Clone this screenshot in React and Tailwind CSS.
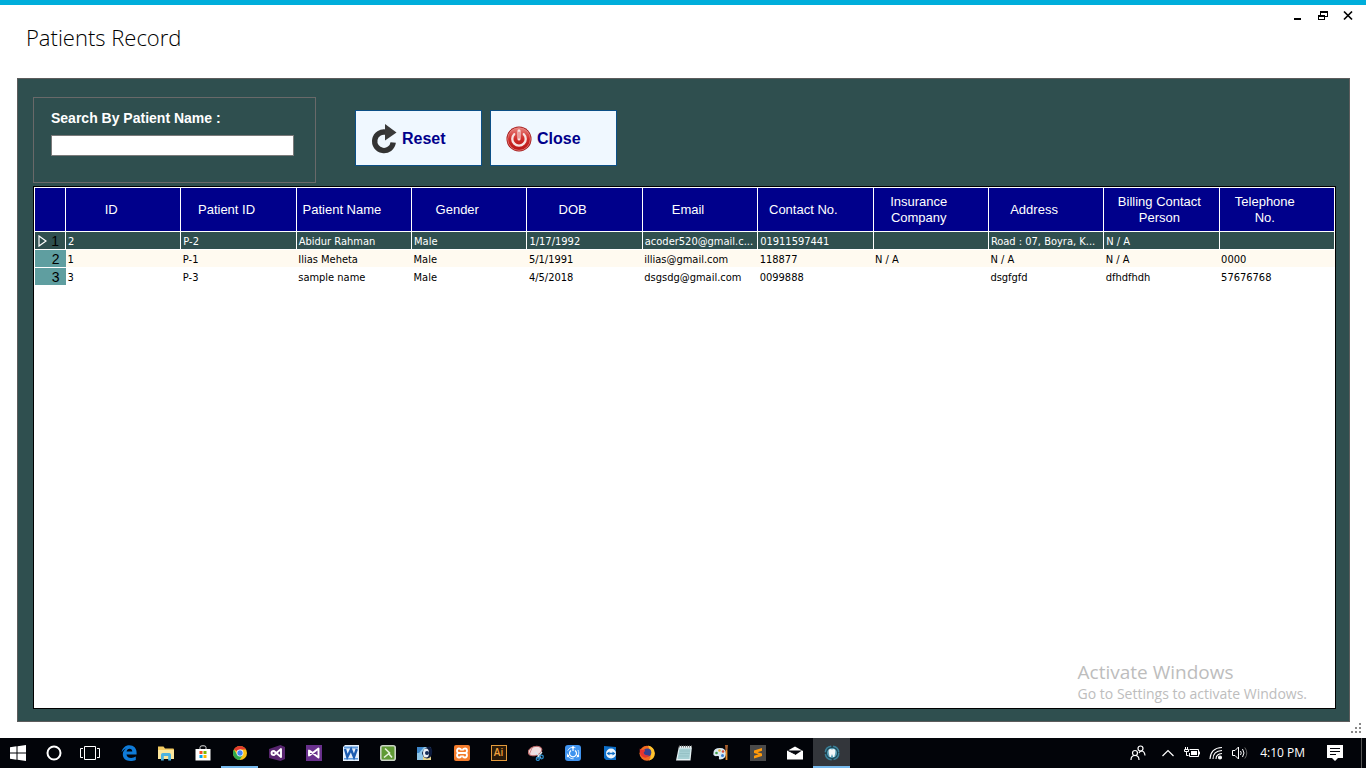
import React, { useState } from "react";

const columns = [
  { key: "id", label: "ID" },
  { key: "patientId", label: "Patient ID" },
  { key: "name", label: "Patient Name" },
  { key: "gender", label: "Gender" },
  { key: "dob", label: "DOB" },
  { key: "email", label: "Email" },
  { key: "contact", label: "Contact No." },
  { key: "insurance", label: "Insurance Company" },
  { key: "address", label: "Address" },
  { key: "billing", label: "Billing Contact Person", wide: true },
  { key: "telephone", label: "Telephone No." },
];

const patients = [
  {
    id: "2",
    patientId: "P-2",
    name: "Abidur Rahman",
    gender: "Male",
    dob: "1/17/1992",
    email: "acoder520@gmail.c...",
    contact: "01911597441",
    insurance: "",
    address: "Road : 07, Boyra, K...",
    billing: "N / A",
    telephone: "",
  },
  {
    id: "1",
    patientId: "P-1",
    name: "Ilias Meheta",
    gender: "Male",
    dob: "5/1/1991",
    email: "illias@gmail.com",
    contact: "118877",
    insurance: "N / A",
    address: "N / A",
    billing: "N / A",
    telephone: "0000",
  },
  {
    id: "3",
    patientId: "P-3",
    name: "sample name",
    gender: "Male",
    dob: "4/5/2018",
    email: "dsgsdg@gmail.com",
    contact: "0099888",
    insurance: "",
    address: "dsgfgfd",
    billing: "dfhdfhdh",
    telephone: "57676768",
  },
];

const ResetIcon = () => (
  <svg width="26" height="30" viewBox="0 0 26 30" aria-hidden="true">
    <path d="M15 8.200A9.300 9.300 0 1 0 22.200 18.500" fill="none" stroke="#333" strokeWidth="5.400" />
    <path d="M14 0 25.500 8.500 14 16.500Z" fill="#3a3a3a" />
  </svg>
);

const PowerIcon = () => (
  <svg width="26" height="26" viewBox="0 0 27 27" aria-hidden="true">
    <defs>
      <linearGradient id="power-red" x1="0" y1="0" x2="0" y2="1">
        <stop offset="0" stopColor="#e8837e" />
        <stop offset="0.5" stopColor="#cf2c29" />
        <stop offset="1" stopColor="#b81616" />
      </linearGradient>
    </defs>
    <circle cx="13.500" cy="13.500" r="13" fill="#a31515" />
    <circle cx="13.500" cy="13.500" r="11.800" fill="url(#power-red)" stroke="#ef9a96" strokeWidth="0.700" />
    <path d="M8.500 8.500a7 7 0 1 0 10 0" fill="none" stroke="#f7e4e3" strokeWidth="2.400" strokeLinecap="round" />
    <path d="M13.500 5v8.500" stroke="#f7e4e3" strokeWidth="3.200" strokeLinecap="round" />
    <path d="M13.500 6v7" stroke="#d8443f" strokeWidth="0.900" />
  </svg>
);

const taskbarApps = [
  {
    name: "Microsoft Edge",
    art: (
      <path
        d="M.600 7.300C1.300 3 4.400.300 8.400.300c4.400 0 7.200 3 7.200 7.400v1.700H5.500c.200 2.500 2.400 3.500 4.700 3.500 1.700 0 3.200-.500 4.600-1.300v3.300c-1.600.800-3.400 1.100-5.300 1.100-4.700 0-7.700-2.500-7.700-6.700 0-2.700 1.500-4.900 4-6-1.800.300-3.800 1.600-5.200 4Zm5-.700h5.700c0-1.900-1-2.900-2.700-2.900-1.600 0-2.800 1.100-3 2.900Z"
        fill="#0f7bd8"
      />
    ),
  },
  {
    name: "File Explorer",
    art: (
      <>
        <path d="M0 1.500h5.500l1.500 2H15q1 0 1 1v9.500H0Z" fill="#f3cb62" />
        <path d="M0 5h16v9H0Z" fill="#fce69c" />
        <path d="M3 15.500V9.800Q3 8 4.800 8h6.400Q13 8 13 9.800v5.700h-2.800V11H5.800v4.500Z" fill="#4db3e0" />
      </>
    ),
  },
  {
    name: "Store",
    art: (
      <>
        <path d="M5 4.500V2.500Q5 .800 7 .800h2q2 0 2 1.700v2" fill="none" stroke="#ddd" />
        <path d="M.500 4h15v11.500h-15Z" fill="#fff" />
        <path d="M4.500 6h3v3h-3Z" fill="#f25022" />
        <path d="M8.500 6h3v3h-3Z" fill="#7fba00" />
        <path d="M4.500 10h3v3h-3Z" fill="#00a4ef" />
        <path d="M8.500 10h3v3h-3Z" fill="#ffb900" />
      </>
    ),
  },
  {
    name: "Google Chrome",
    running: true,
    art: (
      <>
        <circle cx="8" cy="8" r="7" fill="#fbc116" />
        <path d="M8 8 1.900 4.500A7 7 0 0 1 14.100 4.500H8Z" fill="#e33b2e" />
        <path d="M1.900 4.500A7 7 0 0 0 7.600 15L11 9.700 8 8 4.900 9.500Z" fill="#2da94f" />
        <circle cx="8" cy="8" r="3.400" fill="#fff" />
        <circle cx="8" cy="8" r="2.700" fill="#4285f4" />
      </>
    ),
  },
  {
    name: "Visual Studio",
    art: (
      <>
        <path d="M11.500 0 16 2v12l-4.500 2L0 13V4Z" fill="#58266f" />
        <path d="M12 4v8L5 6q-2.500 0-2.500 2T5 10l7-6Z" fill="none" stroke="#fff" strokeWidth="1.900" strokeLinejoin="round" />
      </>
    ),
  },
  {
    name: "Visual Studio Blend",
    art: (
      <>
        <path d="M0 0h16v16H0Z" fill="#68308c" />
        <path d="M12.500 3.500v9L4 6 3 5.500v5L4 10l8.500-6.500Z" fill="none" stroke="#fff" strokeWidth="1.900" strokeLinejoin="round" />
      </>
    ),
  },
  {
    name: "Word",
    art: (
      <>
        <path d="M2 0h14v16H0V2Z" fill="#e6f0fb" />
        <path d="M1 1.500h14v2H1ZM1 13h14v1.500H1Z" fill="#5d9ade" />
        <path d="m2 4 2.300 8L8 4.500 11 12l2.800-8" fill="none" stroke="#1d5cb0" strokeWidth="2.400" />
      </>
    ),
  },
  {
    name: "Camtasia",
    art: (
      <>
        <rect x="0.800" y="0.800" width="14.400" height="14.400" rx="2" fill="#5f9a34" stroke="#c9d3c4" strokeWidth="1.600" />
        <path d="m5 3.500 4.500 4.500L4 12.500M9 9l3 3.500" fill="none" stroke="#e6f2dc" strokeWidth="1.600" />
      </>
    ),
  },
  {
    name: "CCleaner",
    art: (
      <>
        <path d="M0 2h14v13H0Z" fill="#8fc6e8" />
        <path d="M0 2h7L2 8H0Z" fill="#3d86c9" />
        <path d="M6 11h8v4H6Z" fill="#e7d58c" />
        <path d="M5 8q2-6 8-6.500 3 2 2 7.500-1 4-5 4.500Q6 13 5 8Z" fill="#0c1a3c" />
        <ellipse cx="9" cy="8" rx="3" ry="4.500" fill="#e9eff5" />
        <circle cx="10" cy="8" r="2" fill="#142a55" />
      </>
    ),
  },
  {
    name: "XAMPP",
    art: (
      <>
        <rect width="16" height="16" rx="2" fill="#f37c2c" />
        <path
          d="M7.500 5.500Q7 3.500 5 3.500T3 5.800Q3 8 5 8q-2 0-2 2.200T5 12.500t2.500-2M8.500 5.500q.500-2 2.500-2t2 2.300Q13 8 11 8q2 0 2 2.200t-2 2.300-2.500-2M5 8h6"
          fill="none"
          stroke="#fff"
          strokeWidth="1.800"
        />
      </>
    ),
  },
  { name: "Illustrator", label: "Ai" },
  {
    name: "Snipping Tool",
    art: (
      <>
        <ellipse cx="7" cy="6" rx="7" ry="4.500" transform="rotate(-18 7 6)" fill="#f0dede" stroke="#bd6b6b" />
        <path d="m1.500 9 2.500-6" stroke="#cf8585" />
        <path d="m7 7 6 6m1-6-5 6" stroke="#dbe7ee" strokeWidth="1.300" />
        <circle cx="13.500" cy="12" r="1.800" fill="none" stroke="#2b8cc9" strokeWidth="1.300" />
        <circle cx="9.800" cy="14" r="1.500" fill="none" stroke="#2b8cc9" strokeWidth="1.300" />
      </>
    ),
  },
  {
    name: "SHAREit",
    art: (
      <>
        <rect width="16" height="16" rx="3" fill="#3f93ee" />
        <circle cx="8" cy="8" r="5.800" fill="none" stroke="#d7e9fd" strokeDasharray="9 3.100" strokeDashoffset="4" />
        <path d="M6 5.500a3.500 3.500 0 1 0 4 0M8 3.500V6" fill="none" stroke="#fff" strokeWidth="1.200" />
        <circle cx="8" cy="2.500" r="1.200" fill="#fff" />
        <circle cx="3" cy="11" r="1.200" fill="#fff" />
        <circle cx="13" cy="11" r="1.200" fill="#fff" />
      </>
    ),
  },
  {
    name: "TeamViewer",
    art: (
      <>
        <path d="M2 1 14 2v13H4L2 13Z" fill="#0d6fc9" />
        <circle cx="9" cy="8.500" r="5" fill="#eef6fd" />
        <path d="m4.500 8.500 3-2v1.200h3V6.500l3 2-3 2V9.300h-3v1.200Z" fill="#0d6fc9" />
      </>
    ),
  },
  {
    name: "Firefox",
    art: (
      <>
        <circle cx="8" cy="8.300" r="7.500" fill="#f26a21" />
        <path d="M9 .500q6.500 1.500 6.800 7.500T10 15.500q4-5-1-15Z" fill="#ffc42e" />
        <circle cx="8.300" cy="7.500" r="4" fill="#35408e" />
        <path d="M.800 3.500 3 5l3-.500q.500 2-1.500 3 1 3.500 5.500 2.500-2 4-6 2T.800 3.500Z" fill="#e5352f" />
      </>
    ),
  },
  {
    name: "Notepad",
    art: (
      <>
        <path d="M3 1h13l-1.500 14.500H0Z" fill="#e7f2f4" />
        <path d="M3.500 3.500h11L13.500 14h-12Z" fill="#a5cfd3" />
        <path d="M4 6h10M3.500 8.500h10M3 11h10" stroke="#84b2b7" strokeWidth="0.500" />
        <path d="M3 1.500h13" stroke="#777" strokeWidth="1.800" strokeDasharray="1 1" />
      </>
    ),
  },
  {
    name: "Paint",
    art: (
      <>
        <path d="M7 3q6 0 6 5.500T7 14.500q-1.500 0-1-2t-2-1.500-3.500-1Q-.500 3 7 3Z" fill="#d9e8f1" />
        <circle cx="3.500" cy="8" r="1.300" fill="#43a047" />
        <circle cx="6.500" cy="5.500" r="1.300" fill="#e3b43b" />
        <circle cx="10" cy="6.500" r="1.300" fill="#d84a3a" />
        <circle cx="9.500" cy="10.500" r="1.500" fill="#3f7fd0" />
        <path d="M12 0h3l-.500 5h-2Z" fill="#a55d2c" />
        <path d="M13.500 5v10" stroke="#e88b28" strokeWidth="1.800" />
      </>
    ),
  },
  {
    name: "Sublime Text",
    art: (
      <>
        <path d="M0 0h16v16H0Z" fill="#4a4a4a" />
        <path d="m4 5.500 8-2.500v2.800L7.500 7.200 12 8.500v2.500L4 13.500v-2.800l4.500-1.400L4 8Z" fill="#ff9a0b" />
      </>
    ),
  },
  {
    name: "Mail",
    art: (
      <>
        <path d="M0 6 8 1.500 16 6v8.500H0Z" fill="#fff" />
        <path d="M1 5.500h14L9 9.500Z" fill="#05070c" />
        <path d="m1 5.500 8 4" stroke="#05070c" />
      </>
    ),
  },
  {
    name: "Patients Record",
    running: true,
    active: true,
    art: (
      <>
        <circle cx="8" cy="8" r="6.800" fill="#1d4655" stroke="#3b8199" strokeWidth="1.500" strokeDasharray="9 2" />
        <circle cx="8" cy="8" r="5" fill="#5b9fb6" />
        <path d="M5 4.500q1.500-1 3 0 1.500-1 3 0 1 1.500-.700 7.500H9.200L8 9l-1.200 3H5.700Q4 6 5 4.500Z" fill="#f3f7f8" />
      </>
    ),
  },
];

const WindowControls = () => (
  <div className="flex pt-px pr-1.5">
    <button type="button" aria-label="Minimize" className="flex h-5 w-[25px] items-center justify-center">
      <svg width="12" height="12" viewBox="0 0 12 12">
        <path d="M2 8h7v2H2Z" />
      </svg>
    </button>
    <button type="button" aria-label="Restore" className="flex h-5 w-[25px] items-center justify-center">
      <svg width="12" height="12" viewBox="0 0 12 12" fill="none" stroke="#000" shapeRendering="crispEdges">
        <path d="M3.500 5V1.500h7v5H8" />
        <path d="M3 2h8M1 6h7" strokeWidth="2" />
        <path d="M1.500 5.500h6v4h-6Z" />
      </svg>
    </button>
    <button type="button" aria-label="Close window" className="flex h-5 w-[25px] items-center justify-center">
      <svg width="12" height="12" viewBox="0 0 12 12">
        <path d="m2 1.500 8 8m0-8-8 8" stroke="#000" strokeWidth="1.700" />
      </svg>
    </button>
  </div>
);

const PatientTable = ({ rows }) => (
  <table className="w-full table-fixed border-collapse">
    <colgroup>
      <col className="w-[31px]" />
      {columns.map((column) => (
        <col key={column.key} />
      ))}
    </colgroup>
    <thead>
      <tr className="h-11 bg-[#00008b] text-[13px] leading-4 text-white">
        <th className="border border-white" aria-label="Row" />
        {columns.map((column) => (
          <th
            key={column.key}
            className={`border border-white font-normal ${column.wide ? "pr-3 pl-2" : "pr-7 pl-1"}`}
          >
            {column.label}
          </th>
        ))}
      </tr>
    </thead>
    <tbody className="font-['DejaVu_Sans_Condensed','DejaVu_Sans',sans-serif] text-[11px] leading-[14px]">
      {rows.map((row, index) => {
        const selected = index === 0;
        return (
          <tr
            key={row.id}
            className={`h-[18px] ${selected ? "bg-[#2f4f4f] text-white" : index % 2 ? "bg-[#fffaf0]" : "bg-white"}`}
          >
            <th
              className={`border-y border-white p-0 pr-1.5 font-['Liberation_Sans',Arial,sans-serif] text-sm leading-4 font-normal text-black ${
                selected ? "" : "bg-[#5f9ea0]"
              }`}
            >
              <div className="flex items-center justify-end gap-1">
                {selected && (
                  <svg width="9" height="12" viewBox="0 0 9 12" aria-hidden="true">
                    <path d="M1 1v10l7-5Z" fill="none" stroke="#fff" strokeWidth="1.200" />
                  </svg>
                )}
                {index + 1}
              </div>
            </th>
            {columns.map((column) => (
              <td
                key={column.key}
                className={`border-y border-white px-0.5 pt-[3px] pb-0 whitespace-nowrap ${selected ? "border-x" : ""}`}
              >
                {row[column.key]}
              </td>
            ))}
          </tr>
        );
      })}
    </tbody>
  </table>
);

const Taskbar = () => (
  <footer className="flex h-[30px] items-stretch bg-[#020409] font-['Open_Sans',sans-serif] text-xs text-white">
    <button type="button" aria-label="Start" className="flex w-9 items-center justify-center">
      <svg width="16" height="16" viewBox="0 0 16 16" fill="#fff">
        <path d="M0 2.200 6.500 1.300v6.200H0ZM7.500 1.200 16 0v7.500H7.500ZM0 8.500h6.500v6.200L0 13.800ZM7.500 8.500H16V16l-8.500-1.200Z" />
      </svg>
    </button>
    <button type="button" aria-label="Cortana" className="flex w-9 items-center justify-center">
      <svg width="16" height="16" viewBox="0 0 16 16">
        <circle cx="8" cy="8" r="6.500" fill="none" stroke="#fff" strokeWidth="2" />
      </svg>
    </button>
    <button type="button" aria-label="Task view" className="mr-0.5 flex w-9 items-center justify-center">
      <svg width="20" height="16" viewBox="0 0 20 16" fill="none" stroke="#fff">
        <path d="M4.500 1.500h11v13h-11ZM3 3.500H.500v9H3M17 3.500h2.500v9H17" />
      </svg>
    </button>
    <nav className="flex" aria-label="Apps">
      {taskbarApps.map((app) => (
        <button
          key={app.name}
          type="button"
          aria-label={app.name}
          className={`flex w-[37px] items-center justify-center border-b-2 pt-0.5 ${
            app.running ? "border-[#76b9ed]" : "border-transparent"
          } ${app.active ? "bg-[#33363b]" : ""}`}
        >
          {app.label ? (
            <span className="flex size-4 items-center justify-center border border-[#e39a3b] bg-[#2a1a08] text-[10px] font-semibold text-[#f2a33c]">
              {app.label}
            </span>
          ) : (
            <svg width="16" height="16" viewBox="0 0 16 16" aria-hidden="true">
              {app.art}
            </svg>
          )}
        </button>
      ))}
    </nav>
    <div className="ml-auto flex items-center">
      <button type="button" aria-label="People" className="flex w-9 justify-center">
        <svg width="16" height="16" viewBox="0 0 16 16" fill="none" stroke="#fff" strokeWidth="1.200">
          <circle cx="10.500" cy="3.500" r="2.500" />
          <circle cx="5" cy="8" r="2.500" />
          <path d="M1 15q0-4.500 4-4.500T9 15M9 8q1-2 2.500-2 3 0 3.500 4.500" />
        </svg>
      </button>
      <button type="button" aria-label="Show hidden icons" className="flex w-6 justify-center">
        <svg width="14" height="8" viewBox="0 0 14 8" fill="none" stroke="#fff" strokeWidth="1.200">
          <path d="m1.500 7 5.500-5.500L12.500 7" />
        </svg>
      </button>
      <button type="button" aria-label="Battery" className="flex w-6 justify-center">
        <svg width="16" height="12" viewBox="0 0 16 12" fill="none" stroke="#fff">
          <path d="M5.500 2.500h9v7h-9V6M15.500 4.500v3M1.500 0v2M3.500 0v2M.500 2.500h4v2h-4ZM2.500 4.500v4h2" />
          <path d="M7 4h6v4H7Z" fill="#fff" stroke="none" />
        </svg>
      </button>
      <button type="button" aria-label="Network" className="flex w-6 justify-center">
        <svg width="14" height="14" viewBox="0 0 14 14" fill="none" stroke="#fff" strokeWidth="1.100">
          <path d="M1 13Q1.500 2 13 1.500M4 13Q4 5 13 4.500M7 13Q7 8 13 7.500" />
          <circle cx="11" cy="11.500" r="1.500" fill="#fff" />
        </svg>
      </button>
      <button type="button" aria-label="Volume" className="flex w-6 justify-center">
        <svg width="16" height="14" viewBox="0 0 16 14" fill="none" stroke="#fff">
          <path d="M.500 4.500H3L6.500 1v12L3 9.500H.500ZM8.500 5q1.500 2 0 4M10.500 3q3 4 0 8" />
          <path d="M12.800 1.500q4 5.500 0 11" stroke="#666" />
        </svg>
      </button>
      <time className="px-2">4:10 PM</time>
      <button type="button" aria-label="Notifications" className="flex w-11 justify-center">
        <svg width="16" height="16" viewBox="0 0 16 16">
          <path d="M0 0h16v13h-5l-3 3-3-3H0Z" fill="#fff" />
          <path d="M3 3.500h10M3 6.500h10M3 9.500h6" stroke="#05070c" />
        </svg>
      </button>
      <div className="ml-1 h-[30px] w-[5px] border-l border-[#555]" />
    </div>
  </footer>
);

const App = () => {
  const [query, setQuery] = useState("");

  const rows = patients.filter((patient) =>
    patient.name.toLowerCase().includes(query.toLowerCase())
  );

  return (
    <div className="flex min-h-screen flex-col border-t-5 border-[#00aedb] bg-white font-['Liberation_Sans',Arial,sans-serif] text-black">
      <header className="flex h-[73px] items-start justify-between">
        <h1 className="pt-4 pl-6.5 font-['Open_Sans',sans-serif] text-[22px] leading-8 font-light">
          Patients Record
        </h1>
        <WindowControls />
      </header>

      <main className="mr-4 ml-[17px] flex flex-1 flex-col border border-[#5c5c5c] bg-[#2f4f4f] pt-[18px] pr-[13px] pb-3 pl-[15px]">
        <div className="flex items-start">
          <div className="h-[86px] w-[283px] border border-[#696969] px-[17px] pt-2.5">
            <label htmlFor="patient-name" className="block text-sm leading-5 font-bold text-white">
              Search By Patient Name :
            </label>
            <input
              id="patient-name"
              type="text"
              value={query}
              onChange={(e) => setQuery(e.target.value)}
              className="mt-[7px] block h-[21px] w-[243px] border border-[#7a7a7a] bg-white px-1 text-sm text-black outline-none"
            />
          </div>
          <div className="mt-[13px] ml-[39px] flex gap-2">
            <button
              type="button"
              onClick={() => setQuery("")}
              className="flex h-14 w-[127px] items-center gap-[5px] border border-[#0c4f86] bg-[#f0f8ff] pt-0.5 pl-[15px] font-bold text-[#00008b]"
            >
              <ResetIcon />
              Reset
            </button>
            <button
              type="button"
              className="flex h-14 w-[127px] items-center gap-[5px] border border-[#0c4f86] bg-[#f0f8ff] pt-0.5 pl-[15px] font-bold text-[#00008b]"
            >
              <PowerIcon />
              Close
            </button>
          </div>
        </div>

        <section className="relative mt-[3px] flex-1 border border-black bg-white">
          <PatientTable rows={rows} />
          <div className="absolute right-7 bottom-1 font-['Open_Sans',sans-serif] text-[#bdbdbd]">
            <p className="text-[19px] leading-6">Activate Windows</p>
            <p className="text-sm leading-5">Go to Settings to activate Windows.</p>
          </div>
        </section>
      </main>

      <div className="flex h-4 items-end justify-end pr-1 pb-1">
        <svg width="11" height="11" viewBox="0 0 11 11" fill="#888" aria-hidden="true">
          <path d="M8 0h2v2H8ZM4 4h2v2H4ZM8 4h2v2H8ZM0 8h2v2H0ZM4 8h2v2H4ZM8 8h2v2H8Z" />
        </svg>
      </div>
      <Taskbar />
    </div>
  );
};

export default App;
